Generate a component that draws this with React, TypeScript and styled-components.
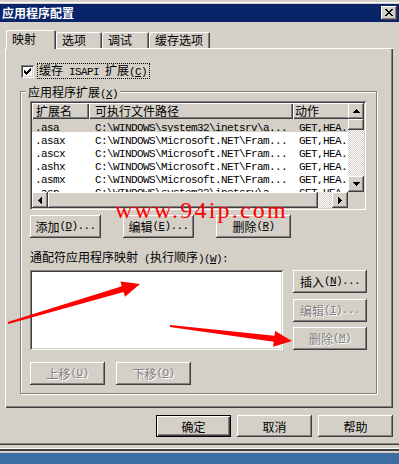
import styled, { createGlobalStyle } from "styled-components";

const FACE = "#d4d0c8";
const SHADOW = "#808080";
const DARK = "#404040";

const raised = `box-shadow: inset -1px -1px ${DARK}, inset 1px 1px #ffffff, inset -2px -2px ${SHADOW}, inset 2px 2px ${FACE};`;
const sunken = `box-shadow: inset 1px 1px ${SHADOW}, inset -1px -1px #ffffff, inset 2px 2px ${DARK}, inset -2px -2px ${FACE};`;

const GlobalStyle = createGlobalStyle`
  html, body {
    margin: 0;
    padding: 0;
  }
  body {
    width: 399px;
    height: 464px;
    overflow: hidden;
    background: #3a6ea5;
    font-family: "Noto Sans CJK SC", "Noto Sans CJK JP", sans-serif;
    font-size: 12px;
    color: #000;
  }
  * {
    box-sizing: border-box;
  }
`;

const columns = [
    { title: "扩展名", width: 57, headPad: 4, pad: 3 },
    { title: "可执行文件路径", width: 204, headPad: 6, pad: 6 },
    { title: "动作", width: 60, headPad: 2, pad: 6 },
];

const rows = [
    [".asa", "C:\\WINDOWS\\system32\\inetsrv\\a...", "GET,HEA..."],
    [".asax", "C:\\WINDOWS\\Microsoft.NET\\Fram...", "GET,HEA..."],
    [".ascx", "C:\\WINDOWS\\Microsoft.NET\\Fram...", "GET,HEA..."],
    [".ashx", "C:\\WINDOWS\\Microsoft.NET\\Fram...", "GET,HEA..."],
    [".asmx", "C:\\WINDOWS\\Microsoft.NET\\Fram...", "GET,HEA..."],
    [".asp", "C:\\WINDOWS\\system32\\inetsrv\\a...", "GET,HEA..."],
];

const Key = ({ k }: { k: string }) => (
    <Latin>
        (<u>{k}</u>)
    </Latin>
);

const Arrow = ({ dir }: { dir: "up" | "down" | "left" | "right" }) => {
    const d = {
        up: "M3 0h1v1H3z M2 1h3v1H2z M1 2h5v1H1z M0 3h7v1H0z",
        down: "M0 0h7v1H0z M1 1h5v1H1z M2 2h3v1H2z M3 3h1v1H3z",
        left: "M3 0h1v7H3z M2 1h1v5H2z M1 2h1v3H1z M0 3h1v1H0z",
        right: "M0 0h1v7H0z M1 1h1v5H1z M2 2h1v3H2z M3 3h1v1H3z",
    }[dir];
    const vertical = dir === "up" || dir === "down";
    return (
        <svg width={vertical ? 7 : 4} height={vertical ? 4 : 7} shapeRendering="crispEdges">
            <path d={d} fill="#000"/>
        </svg>
    );
};

function App() {
    return (
        <>
            <GlobalStyle/>
            <Screen>
                <Dialog>
                    <TopEdge/>
                    <TitleBar>
                        <Title>应用程序配置</Title>
                        <CloseButton>
                            <svg width="8" height="7" shapeRendering="crispEdges">
                                <path
                                    d="M0 0h2v1H0z M6 0h2v1H6z M1 1h2v1H1z M5 1h2v1H5z M2 2h4v1H2z M3 3h2v1H3z M2 4h4v1H2z M1 5h2v1H1z M5 5h2v1H5z M0 6h2v1H0z M6 6h2v1H6z"
                                    fill="#000"/>
                            </svg>
                        </CloseButton>
                    </TitleBar>
                    <Body>
                        <TabStrip>
                            <Tab $active $width={50}>映射</Tab>
                            <Tab $width={46}>选项</Tab>
                            <Tab $width={47}>调试</Tab>
                            <Tab $width={61}>缓存选项</Tab>
                        </TabStrip>
                        <Panel>
                            <CheckRow>
                                <CheckBox>
                                    <svg width="7" height="7" shapeRendering="crispEdges">
                                        <path
                                            d="M6 0h1v1H6z M5 1h2v1H5z M0 2h1v1H0z M4 2h3v1H4z M0 3h2v1H0z M3 3h3v1H3z M0 4h5v1H0z M1 5h3v1H1z M2 6h1v1H2z"
                                            fill="#000"/>
                                    </svg>
                                </CheckBox>
                                <FocusLabel>
                                    缓存<Latin> ISAPI </Latin>扩展<Key k="C"/>
                                </FocusLabel>
                            </CheckRow>
                            <GroupBox>
                                <Legend>应用程序扩展<Key k="X"/></Legend>
                                <ListView>
                                    <ListContent>
                                        <HeaderRow>
                                            {columns.map((c) => (
                                                <HeaderCell key={c.title} $width={c.width} $pad={c.headPad}>
                                                    {c.title}
                                                </HeaderCell>
                                            ))}
                                        </HeaderRow>
                                        {rows.map((r, i) => (
                                            <Row key={r[0]} $selected={i === 0}>
                                                {r.map((text, j) => (
                                                    <Cell key={j} $width={columns[j].width} $pad={columns[j].pad}>
                                                        <Latin>{text}</Latin>
                                                    </Cell>
                                                ))}
                                            </Row>
                                        ))}
                                    </ListContent>
                                    <VScroll>
                                        <ScrollButton><Arrow dir="up"/></ScrollButton>
                                        <Thumb $size={11}/>
                                        <Track/>
                                        <ScrollButton><Arrow dir="down"/></ScrollButton>
                                    </VScroll>
                                    <HScroll>
                                        <ScrollButton><Arrow dir="left"/></ScrollButton>
                                        <Thumb/>
                                        <Track $size={14}/>
                                        <ScrollButton><Arrow dir="right"/></ScrollButton>
                                    </HScroll>
                                    <Corner/>
                                </ListView>
                                <ButtonRow>
                                    <PushButton $width={71}>添加<Key k="D"/><Latin>...</Latin></PushButton>
                                    <PushButton $width={71}>编辑<Key k="E"/><Latin>...</Latin></PushButton>
                                    <PushButton $width={75}>删除<Key k="R"/></PushButton>
                                </ButtonRow>
                                <FieldLabel>
                                    通配符应用程序映射<Latin> (</Latin>执行顺序<Latin>)</Latin><Key k="W"/><Latin>:</Latin>
                                </FieldLabel>
                                <WildRow>
                                    <ListBox/>
                                    <SideButtons>
                                        <PushButton $width={74}>插入<Key k="N"/><Latin>...</Latin></PushButton>
                                        <PushButton $width={74} $disabled>编辑<Key k="I"/><Latin>...</Latin></PushButton>
                                        <PushButton $width={74} $disabled>删除<Key k="M"/></PushButton>
                                    </SideButtons>
                                </WildRow>
                                <MoveRow>
                                    <PushButton $width={75} $disabled>上移<Key k="U"/></PushButton>
                                    <PushButton $width={75} $disabled>下移<Key k="O"/></PushButton>
                                </MoveRow>
                            </GroupBox>
                        </Panel>
                        <Footer>
                            <PushButton $width={75} $height={22} $default>确定</PushButton>
                            <PushButton $width={75} $height={22}>取消</PushButton>
                            <PushButton $width={75} $height={22}>帮助</PushButton>
                        </Footer>
                    </Body>
                    <BottomEdge/>
                </Dialog>
                <Desktop/>
                <Watermark>www.94ip.com</Watermark>
                <Arrows width="399" height="464" viewBox="0 0 399 464">
                    <polygon
                        points="7.72,322.04 121.85,286.22 120.4,281.4 140,284 125,296.8 123.55,291.98 8.28,323.96"
                        fill="#ff0000"/>
                    <polygon
                        points="170.12,325.01 274.47,335.82 275.1,330.9 292,341 273.1,346.7 273.73,341.78 169.88,326.99"
                        fill="#ff0000"/>
                </Arrows>
            </Screen>
        </>
    )
}

const Screen = styled.div`
    position: relative;
    width: 399px;
    height: 464px;
    display: flex;
    flex-direction: column;
    overflow: hidden;
`

const Dialog = styled.div`
    display: flex;
    flex-direction: column;
    background: ${FACE};
`

const TopEdge = styled.div`
    height: 4px;
    background: linear-gradient(${FACE} 0 2px, #ffffff 2px 3px, ${FACE} 3px);
`

const TitleBar = styled.div`
    height: 18px;
    background: #0a246a;
    display: flex;
    align-items: center;
    justify-content: space-between;
    padding: 0 2px;
`

const Title = styled.div`
    color: #ffffff;
    font-weight: bold;
    font-size: 12px;
    line-height: 18px;
`

const CloseButton = styled.div`
    width: 16px;
    height: 14px;
    background: ${FACE};
    ${raised}
    display: flex;
    align-items: center;
    justify-content: center;
    padding-bottom: 1px;
`

const Body = styled.div`
    padding: 8px 6px 6px 5px;
    display: flex;
    flex-direction: column;
`

const TabStrip = styled.div`
    display: flex;
    align-items: flex-end;
    height: 18px;
    padding-left: 1px;
`

const Tab = styled.div<{ $active?: boolean; $width: number }>`
    position: relative;
    z-index: ${(p) => (p.$active ? 1 : 0)};
    width: ${(p) => p.$width}px;
    height: ${(p) => (p.$active ? 19 : 16)}px;
    margin-bottom: ${(p) => (p.$active ? -1 : 0)}px;
    padding-left: 6px;
    background: ${FACE};
    border-radius: 2px 2px 0 0;
    box-shadow: inset 1px 1px #ffffff, inset -1px 0 ${DARK}, inset -2px 0 ${SHADOW};
    line-height: ${(p) => (p.$active ? 17 : 16)}px;
    white-space: nowrap;
`

const Panel = styled.div`
    height: 360px;
    background: ${FACE};
    box-shadow: inset 1px 1px #ffffff, inset -1px -1px ${DARK}, inset -2px -2px ${SHADOW};
    padding: 16px 0 0 15px;
    display: flex;
    flex-direction: column;
`

const CheckRow = styled.div`
    display: flex;
    align-items: center;
    gap: 3px;
    height: 14px;
    padding-left: 1px;
`

const CheckBox = styled.div`
    width: 13px;
    height: 13px;
    background: #ffffff;
    ${sunken}
    display: flex;
    align-items: center;
    justify-content: center;
`

const FocusLabel = styled.div`
    border: 1px dotted #000;
    padding: 0 2px 0 1px;
    line-height: 12px;
    white-space: nowrap;
`

const Latin = styled.span`
    font-family: "Liberation Mono", monospace;
    font-size: 11px;
    letter-spacing: -0.6px;
`

const GroupBox = styled.div`
    position: relative;
    margin-top: 13px;
    width: 357px;
    height: 303px;
    border: 1px solid ${SHADOW};
    box-shadow: 1px 1px #ffffff, inset 1px 1px #ffffff;
    padding: 9px 0 0 9px;
    display: flex;
    flex-direction: column;
`

const Legend = styled.div`
    position: absolute;
    top: -7px;
    left: 5px;
    padding: 0 2px;
    background: ${FACE};
    line-height: 13px;
    white-space: nowrap;
`

const ListView = styled.div`
    width: 336px;
    height: 109px;
    background: #ffffff;
    ${sunken}
    padding: 2px;
    display: grid;
    grid-template-columns: 1fr 16px;
    grid-template-rows: 1fr 16px;
`

const ListContent = styled.div`
    overflow: hidden;
    display: flex;
    flex-direction: column;
`

const HeaderRow = styled.div`
    display: flex;
    height: 16px;
    flex-shrink: 0;
`

const HeaderCell = styled.div<{ $width: number; $pad: number }>`
    width: ${(p) => p.$width}px;
    flex-shrink: 0;
    padding-left: ${(p) => p.$pad}px;
    background: ${FACE};
    box-shadow: inset 1px 1px #ffffff, inset -1px -1px ${DARK}, inset -2px -2px ${SHADOW};
    line-height: 16px;
    white-space: nowrap;
`

const Row = styled.div<{ $selected?: boolean }>`
    display: flex;
    height: 13px;
    flex-shrink: 0;
    background: ${(p) => (p.$selected ? FACE : "transparent")};
    line-height: 13px;
`

const Cell = styled.div<{ $width: number; $pad: number }>`
    width: ${(p) => p.$width}px;
    flex-shrink: 0;
    padding-left: ${(p) => p.$pad}px;
    white-space: nowrap;
    overflow: hidden;
`

const VScroll = styled.div`
    display: flex;
    flex-direction: column;
`

const HScroll = styled.div`
    display: flex;
`

const ScrollButton = styled.div`
    width: 16px;
    height: 16px;
    flex-shrink: 0;
    background: ${FACE};
    ${raised}
    display: flex;
    align-items: center;
    justify-content: center;
`

const Thumb = styled.div<{ $size?: number }>`
    flex: ${(p) => (p.$size ? `0 0 ${p.$size}px` : "1")};
    background: ${FACE};
    ${raised}
`

const Track = styled.div<{ $size?: number }>`
    flex: ${(p) => (p.$size ? `0 0 ${p.$size}px` : "1")};
    background: repeating-conic-gradient(${FACE} 0 25%, #ffffff 0 50%) 0 0 / 2px 2px;
`

const Corner = styled.div`
    background: ${FACE};
`

const ButtonRow = styled.div`
    display: flex;
    gap: 22px;
    margin-top: 5px;
`

const PushButton = styled.div<{ $width: number; $height?: number; $default?: boolean; $disabled?: boolean }>`
    width: ${(p) => p.$width}px;
    height: ${(p) => p.$height ?? 23}px;
    flex-shrink: 0;
    background: ${FACE};
    ${(p) =>
        p.$default
            ? `border: 1px solid #000; box-shadow: inset 1px 1px #ffffff, inset -1px -1px ${DARK}, inset -2px -2px ${SHADOW};`
            : raised}
    display: flex;
    align-items: center;
    justify-content: center;
    white-space: nowrap;
    line-height: 13px;
    color: ${(p) => (p.$disabled ? SHADOW : "#000")};
    text-shadow: ${(p) => (p.$disabled ? "1px 1px #ffffff" : "none")};
`

const FieldLabel = styled.div`
    margin-top: 12px;
    line-height: 13px;
    height: 13px;
    white-space: nowrap;
`

const WildRow = styled.div`
    display: flex;
    gap: 10px;
    margin-top: 7px;
`

const ListBox = styled.div`
    width: 253px;
    height: 80px;
    background: #ffffff;
    ${sunken}
`

const SideButtons = styled.div`
    height: 80px;
    display: flex;
    flex-direction: column;
    justify-content: space-between;
`

const MoveRow = styled.div`
    display: flex;
    gap: 11px;
    margin-top: 12px;
`

const Footer = styled.div`
    display: flex;
    justify-content: flex-end;
    gap: 6px;
    margin-top: 7px;
`

const BottomEdge = styled.div`
    height: 10px;
    background: linear-gradient(
        ${SHADOW} 0 1px,
        ${DARK} 1px 2px,
        ${FACE} 2px 5px,
        #ffffff 5px 6px,
        ${DARK} 6px 8px,
        ${FACE} 8px
    );
`

const Desktop = styled.div`
    flex: 1;
    background: #3a6ea5;
`

const Watermark = styled.div`
    position: absolute;
    left: 115px;
    top: 198px;
    font-family: "Liberation Serif", serif;
    font-size: 24px;
    line-height: 24px;
    letter-spacing: 2.2px;
    color: #ff0000;
    pointer-events: none;
    white-space: nowrap;
`

const Arrows = styled.svg`
    position: absolute;
    left: 0;
    top: 0;
    pointer-events: none;
`

export default App
